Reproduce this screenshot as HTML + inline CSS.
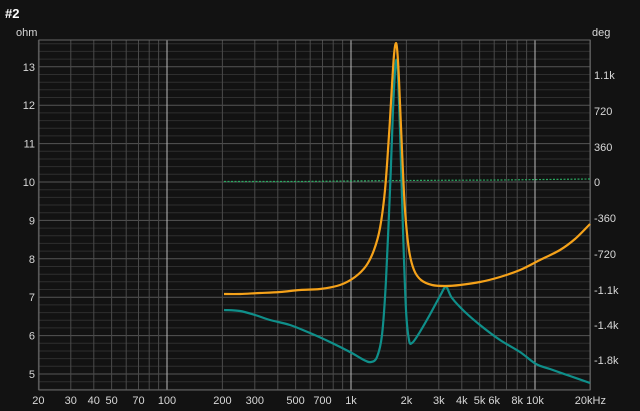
<!DOCTYPE html>
<html><head><style>
html,body{margin:0;padding:0;background:#121212;width:640px;height:411px;overflow:hidden}
svg{display:block}
text{font-family:"Liberation Sans",sans-serif;font-size:11px;fill:#d8d8d8}
</style></head><body>
<svg width="640" height="411" viewBox="0 0 640 411">
<rect width="640" height="411" fill="#121212"/>
<text x="5" y="18" style="font-weight:bold;font-size:13px;fill:#fff">#2</text>
<text x="16" y="36">ohm</text>
<text x="592" y="36">deg</text>
<g id="grid"></g>
<rect x="39" y="40" width="551" height="350" fill="none" stroke="#666" stroke-width="1"/>
<polyline fill="none" stroke="#2aa860" stroke-width="1.2" stroke-dasharray="2,1.5" points="224,181.5 300,181.5 400,180.5 500,180 590,179"/>
<path id="teal" fill="none" stroke="#0f8f8a" stroke-width="2.2" stroke-linejoin="round"/>
<path id="orange" fill="none" stroke="#f5a21a" stroke-width="2.2" stroke-linejoin="round"/>
</svg>
<script>
var g=document.getElementById('grid'),s='';
function X(f){return 351+184*Math.log10(f/1000);}
function Y(o){return 182-(o-10)*38.4;}
for(var o=4.6;o<=13.7;o+=0.2){var y=Y(o);if(y<40||y>390)continue;var maj=Math.abs(o-Math.round(o))<0.01;
s+='<line x1="39" x2="590" y1="'+y.toFixed(1)+'" y2="'+y.toFixed(1)+'" stroke="'+(maj?'#555':'#2e2e2e')+'"/>';}
var fs=[];for(var d=10;d<=10000;d*=10)for(var k=1;k<10;k++)fs.push(d*k);fs.push(20000);
fs.forEach(function(f){if(f<20||f>20000)return;var x=X(f).toFixed(1);var maj=(f==100||f==1000||f==10000);
s+='<line y1="40" y2="390" x1="'+x+'" x2="'+x+'" stroke="'+(maj?'#bbb':'#4a4a4a')+'"/>';});
for(var o=5;o<=13;o++)s+='<text x="35" y="'+(Y(o)+4)+'" text-anchor="end">'+o+'</text>';
var ph=[["1.1k",75],["720",111],["360",147],["0",182],["-360",218],["-720",254],["-1.1k",290],["-1.4k",325],["-1.8k",360]];
ph.forEach(function(p){s+='<text x="594" y="'+(p[1]+4)+'">'+p[0]+'</text>';});
var fl=[[20,"20"],[30,"30"],[40,"40"],[50,"50"],[70,"70"],[100,"100"],[200,"200"],[300,"300"],[500,"500"],[700,"700"],[1000,"1k"],[2000,"2k"],[3000,"3k"],[4000,"4k"],[5000,"5k"],[6000,"6k"],[8000,"8k"],[10000,"10k"],[20000,"20kHz"]];
fl.forEach(function(p){s+='<text x="'+X(p[0]).toFixed(1)+'" y="404" text-anchor="middle">'+p[1]+'</text>';});
g.innerHTML=s;
function cr(p){var d='M'+p[0][0]+','+p[0][1];for(var i=0;i<p.length-1;i++){var p0=p[i-1]||p[i],p1=p[i],p2=p[i+1],p3=p[i+2]||p2;
d+=' C'+(p1[0]+(p2[0]-p0[0])/6).toFixed(1)+','+(p1[1]+(p2[1]-p0[1])/6).toFixed(1)+' '+(p2[0]-(p3[0]-p1[0])/6).toFixed(1)+','+(p2[1]-(p3[1]-p1[1])/6).toFixed(1)+' '+p2[0]+','+p2[1];}return d;}
var O=[[224,294],[240,294],[260,293],[280,292],[300,290],[320,289],[340,285],[355,277],[366,266],[374,250],[380,228],[385,190],[389,135],[392,85],[394,55],[395.5,44],[397,48],[399,80],[402,150],[405,210],[409,250],[414,270],[421,280],[432,285],[445,286],[460,285],[480,282],[500,277],[520,270],[540,260],[560,250],[575,239],[590,224]];
var T=[[224,310],[240,311],[255,315],[270,320],[290,325],[310,333],[330,342],[350,352],[364,360],[371,362],[377,357],[382,335],[386,280],[390,190],[393,110],[395.5,65],[397.5,68],[400,130],[403,230],[406,310],[409,340],[412,343],[418,335],[428,318],[440,296],[446,287],[452,298],[465,312],[480,325],[500,340],[520,352],[536,364],[550,369],[570,376],[590,383]];
document.getElementById('orange').setAttribute('d',cr(O));
document.getElementById('teal').setAttribute('d',cr(T));
</script>
</body></html>
